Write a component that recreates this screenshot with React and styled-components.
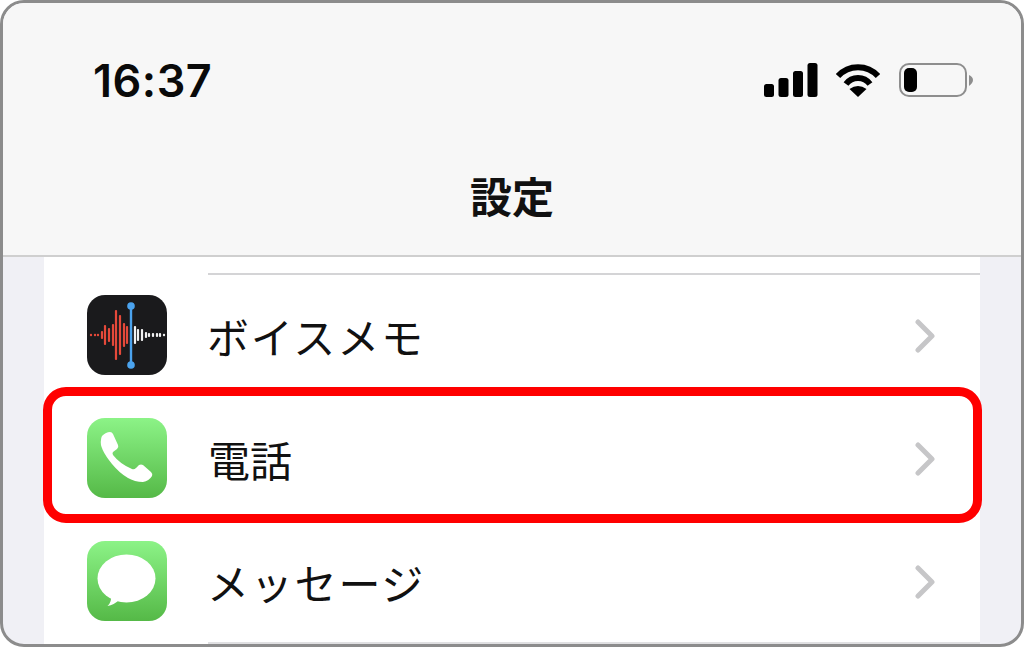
import React from 'react'
import styled, { createGlobalStyle } from 'styled-components'

const GlobalStyle = createGlobalStyle`
html, body {
  margin: 0;
  padding: 0;
  background: #fff;
}
`

const Frame = styled.div`
box-sizing: border-box;
width: 1024px;
height: 647px;
border: 3px solid #8c8c8c;
border-radius: 24px;
overflow: hidden;
display: flex;
flex-direction: column;
background: #f0f0f5;
font-family: "Noto Sans CJK JP", sans-serif;
color: #111;
`

const Header = styled.header`
box-sizing: border-box;
height: 254px;
flex: none;
background: #f7f7f7;
border-bottom: 2px solid #cfcfcf;
display: flex;
flex-direction: column;
`

const StatusBar = styled.div`
height: 154px;
display: flex;
align-items: center;
justify-content: space-between;
padding: 0 48px 0 90px;
box-sizing: border-box;
`

const Time = styled.div`
font-family: Inter, sans-serif;
font-weight: 600;
font-size: 45px;
letter-spacing: 0.5px;
color: #0a0a0a;
`

const StatusIcons = styled.div`
display: flex;
align-items: center;
margin-top: -1px;
`

const NavTitle = styled.h1`
margin: -3px 0 0;
text-align: center;
font-size: 42px;
line-height: 82px;
font-weight: 700;
color: #111;
`

const List = styled.div`
flex: 1;
margin: 0 41px;
padding-top: 16px;
background: #fff;
`

const Row = styled.div`
position: relative;
display: flex;
align-items: center;
padding-left: 43px;
`

const Body = styled.div`
flex: 1;
box-sizing: border-box;
height: 123px;
margin-left: 41px;
padding: 0 45px 0 0;
display: flex;
align-items: center;
justify-content: space-between;
border-top: 2px solid ${(p) => p.$line};
`

const Label = styled.span`
font-size: 42px;
font-weight: 400;
line-height: 1;
color: #111;
letter-spacing: ${(p) => (p.$kana ? '1.8px' : '0')};
margin-left: ${(p) => (p.$kana ? '-1px' : '0')};
`

const AppIcon = styled.svg`
display: block;
width: 80px;
height: 80px;
flex: none;
`

const Highlight = styled.div`
position: absolute;
z-index: 1;
left: -1px;
right: -2px;
top: -9px;
bottom: -4px;
box-sizing: border-box;
border: 9px solid #ff0000;
border-radius: 23px;
pointer-events: none;
`

const Chevron = () => (
  <svg width="20" height="34" viewBox="0 0 20 34" fill="none">
    <path d="M3 3 L17 17 L3 31" stroke="#c6c6c8" strokeWidth="5" strokeLinecap="round" strokeLinejoin="round" />
  </svg>
)

const redBars = [[4, 1.2], [8, 1.2], [11, 1.2], [15, 4], [18, 10], [22, 7], [26, 11], [29, 25], [33, 20], [37, 12], [40, 9]]
const whiteBars = [[48, 9], [51, 6], [55, 6], [59, 3], [62, 2], [66, 2], [70, 2], [73, 2], [77, 1.2]]

const MemoIcon = () => (
  <AppIcon viewBox="0 0 80 80">
    <rect width="80" height="80" rx="18" fill="#1a1a1c" />
    {redBars.map(([x, h]) => (
      <rect key={x} x={x - 1.1} y={40 - h} width="2.2" height={h * 2} rx="1" fill="#e5493a" />
    ))}
    {whiteBars.map(([x, h]) => (
      <rect key={x} x={x - 1.1} y={40 - h} width="2.2" height={h * 2} rx="1" fill="#f2f2f2" />
    ))}
    <rect x="42.8" y="11" width="2.4" height="59" fill="#4ba3ee" />
    <circle cx="44" cy="11" r="3.8" fill="#4ba3ee" />
    <circle cx="44" cy="70" r="3.8" fill="#4ba3ee" />
  </AppIcon>
)

const GreenFill = ({ id }) => (
  <>
    <defs>
      <linearGradient id={id} x1="0" y1="0" x2="0" y2="1">
        <stop offset="0" stopColor="#8cf387" />
        <stop offset="1" stopColor="#55b947" />
      </linearGradient>
    </defs>
    <rect width="80" height="80" rx="18" fill={`url(#${id})`} />
  </>
)

const PhoneIcon = () => (
  <AppIcon viewBox="0 0 80 80">
    <GreenFill id="phoneGreen" />
    <path
      d="M15 18 Q19 14 23 14 Q25 14 26 16 L31 27 Q32 29 30 31 L26 34 Q25 35 26 37 Q33 46 45 51 Q47 52 49 50 L52 47 Q54 46 56 47 L64 54 Q66 56 65 58 Q62 63 56 64 Q40 64 25 46 Q12 30 14 22 Q14 20 15 18 Z"
      fill="#fff"
    />
  </AppIcon>
)

const MessageIcon = () => (
  <AppIcon viewBox="0 0 80 80">
    <GreenFill id="messageGreen" />
    <ellipse cx="39.5" cy="37.5" rx="29" ry="24" fill="#fff" />
    <path d="M24 54 Q25 61 20.5 65 Q27 64 32 59 Z" fill="#fff" />
  </AppIcon>
)

const SignalIcon = () => (
  <svg width="54" height="34" viewBox="0 0 54 34" fill="#000">
    <rect x="0" y="21" width="10" height="13" rx="2.5" />
    <rect x="14.5" y="15" width="10" height="19" rx="2.5" />
    <rect x="29" y="8" width="10" height="26" rx="2.5" />
    <rect x="43.5" y="0" width="10" height="34" rx="2.5" />
  </svg>
)

const WifiIcon = () => (
  <svg width="46" height="34" viewBox="0 0 46 34" fill="none" style={{ marginLeft: 17 }}>
    <path d="M3 13 A27 27 0 0 1 43 13" stroke="#000" strokeWidth="6" />
    <path d="M11 21 A15 15 0 0 1 35 21" stroke="#000" strokeWidth="6" />
    <path d="M23 34 L14.5 26 Q23 20 31.5 26 Z" fill="#000" />
  </svg>
)

const BatteryIcon = () => (
  <svg width="74" height="34" viewBox="0 0 74 34" fill="none" style={{ marginLeft: 18 }}>
    <rect x="1" y="1" width="66" height="32" rx="9" stroke="#8e8e8e" strokeWidth="2" />
    <rect x="5" y="5" width="13" height="24" rx="5" fill="#000" />
    <path d="M70 12 Q74 14 74 17 Q74 20 70 23 Z" fill="#8e8e8e" />
  </svg>
)

function App() {
  return (
    <>
      <GlobalStyle />
      <Frame>
        <Header>
          <StatusBar>
            <Time>16:37</Time>
            <StatusIcons>
              <SignalIcon />
              <WifiIcon />
              <BatteryIcon />
            </StatusIcons>
          </StatusBar>
          <NavTitle>設定</NavTitle>
        </Header>
        <List>
          <Row>
            <MemoIcon />
            <Body $line="#d4d4d6">
              <Label $kana>ボイスメモ</Label>
              <Chevron />
            </Body>
          </Row>
          <Row>
            <PhoneIcon />
            <Body $line="#fff">
              <Label>電話</Label>
              <Chevron />
            </Body>
            <Highlight />
          </Row>
          <Row>
            <MessageIcon />
            <Body $line="#fff">
              <Label $kana>メッセージ</Label>
              <Chevron />
            </Body>
          </Row>
          <Row>
            <AppIcon as="div" />
            <Body $line="#e0e0e2" />
          </Row>
        </List>
      </Frame>
    </>
  )
}

export default App
